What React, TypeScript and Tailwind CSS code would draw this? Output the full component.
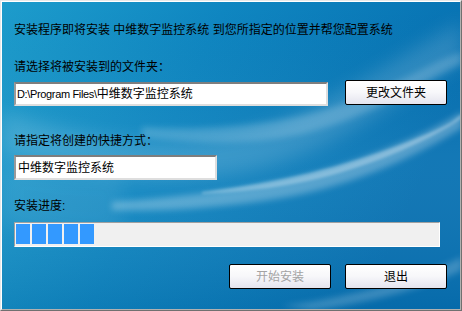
import React from "react";

const font = { fontFamily: '"Liberation Sans", "Noto Sans CJK SC", sans-serif' };

function Bg() {
  return (
    <svg className="absolute inset-0 h-full w-full" viewBox="0 0 458 307" preserveAspectRatio="none">
      <defs>
        <linearGradient id="base" x1="0" y1="0" x2="1" y2="0.3">
          <stop offset="0" stopColor="#1d9ccc" />
          <stop offset="0.45" stopColor="#0f86c1" />
          <stop offset="1" stopColor="#0771b2" />
        </linearGradient>
        <linearGradient id="vert" x1="0" y1="0" x2="0" y2="1">
          <stop offset="0" stopColor="#000000" stopOpacity="0" />
          <stop offset="0.5" stopColor="#ffffff" stopOpacity="0.05" />
          <stop offset="1" stopColor="#003a70" stopOpacity="0.12" />
        </linearGradient>
        <filter id="b8"><feGaussianBlur stdDeviation="9" /></filter>
        <filter id="b3"><feGaussianBlur stdDeviation="3" /></filter>
        <filter id="b2"><feGaussianBlur stdDeviation="1.5" /></filter>
      </defs>
      <rect width="458" height="307" fill="url(#base)" />
      <rect width="458" height="307" fill="url(#vert)" />
      <path d="M0,110 C120,150 220,150 300,110 S420,40 460,20 L460,60 C400,90 340,150 240,170 C150,185 60,170 0,150 Z" fill="#ffffff" opacity="0.14" filter="url(#b8)" />
      <path d="M140,125 C220,130 300,120 360,95 S430,60 460,50 L460,62 C420,80 370,115 300,132 C240,145 180,140 140,135 Z" fill="#ffffff" opacity="0.18" filter="url(#b3)" />
      <path d="M110,200 C220,192 300,178 360,156 S440,122 460,110 L460,126 C420,150 360,182 280,196 C220,206 160,210 110,208 Z" fill="#ffffff" opacity="0.28" filter="url(#b3)" />
      <path d="M200,190 C280,180 340,165 400,142 S450,118 460,112 L460,116 C440,130 400,152 340,170 C290,185 240,190 200,192 Z" fill="#ffffff" opacity="0.3" filter="url(#b2)" />
      <path d="M280,304 C350,296 420,275 460,255 L460,268 C420,288 360,302 310,308 Z" fill="#ffffff" opacity="0.2" filter="url(#b3)" />
      <path d="M0,160 C40,170 80,175 120,172 L120,230 C80,235 40,230 0,220 Z" fill="#ffffff" opacity="0.06" filter="url(#b8)" />
    </svg>
  );
}

function Btn({ children, disabled }: { children: React.ReactNode; disabled?: boolean }) {
  return (
    <div
      className={`flex h-[25px] w-[102px] items-center justify-center rounded-[2px] border border-black bg-[linear-gradient(to_bottom,#ffffff_0%,#f7f7fa_50%,#e4e4ee_100%)] text-[12px] leading-[12px] ${
        disabled ? "text-[#a3a3a3]" : "text-black"
      }`}
    >
      {children}
    </div>
  );
}

export default function App() {
  return (
    <div className="h-[311px] w-[462px] overflow-hidden" style={font}>
      <div className="h-full w-full border-t border-l border-t-[#e8e8e8] border-l-[#e8e8e8] border-r border-b border-r-[#707070] border-b-[#707070]">
        <div className="relative h-full w-full border-t border-l border-t-white border-l-white border-r border-b border-r-[#b0b0b0] border-b-[#b0b0b0]">
          <Bg />
          <div className="relative flex flex-col pl-[12px] pt-[20px] text-[12px] text-black">
            <div className="h-[16px] leading-[16px]">安装程序即将安装 中维数字监控系统 到您所指定的位置并帮您配置系统</div>
            <div className="mt-[21px] h-[16px] leading-[16px]">请选择将被安装到的文件夹：</div>
            <div className="mt-[5px] flex items-start">
              <div className="mt-[2px] flex h-[24px] w-[314px] items-center border-t-2 border-l-2 border-t-[#7e7e7e] border-l-[#9a9a9a] border-r-2 border-b-2 border-r-[#dedede] border-b-[#dedede] bg-white pl-[1px]">
                <span className="text-[11px] tracking-[-0.35px]">D:\Program Files\</span>
                <span>中维数字监控系统</span>
              </div>
              <div className="ml-[17px]">
                <Btn>更改文件夹</Btn>
              </div>
            </div>
            <div className="mt-[27px] h-[16px] leading-[16px]">请指定将创建的快捷方式：</div>
            <div className="mt-[6px] flex h-[25px] w-[203px] items-center border-t-2 border-l-2 border-t-[#7e7e7e] border-l-[#9a9a9a] border-r-2 border-b-2 border-r-[#dedede] border-b-[#dedede] bg-white pl-[2px]">
              中维数字监控系统
            </div>
            <div className="mt-[18px] h-[16px] leading-[16px]">安装进度:</div>
            <div className="mt-[8px] flex h-[25px] w-[426px] gap-[2px] border-t border-l border-t-[#a0a0a0] border-l-[#a0a0a0] border-r border-b border-r-white border-b-white bg-[#f0f0f0] pl-[1px] pt-[1px] pb-[2px]">
              <div className="h-[20px] w-[14px] bg-[#3399ff]" />
              <div className="h-[20px] w-[14px] bg-[#3399ff]" />
              <div className="h-[20px] w-[14px] bg-[#3399ff]" />
              <div className="h-[20px] w-[14px] bg-[#3399ff]" />
              <div className="h-[20px] w-[14px] bg-[#3399ff]" />
            </div>
            <div className="mt-[17px] flex w-[433px] justify-end gap-[14px]">
              <Btn disabled>开始安装</Btn>
              <Btn>退出</Btn>
            </div>
          </div>
        </div>
      </div>
    </div>
  );
}
